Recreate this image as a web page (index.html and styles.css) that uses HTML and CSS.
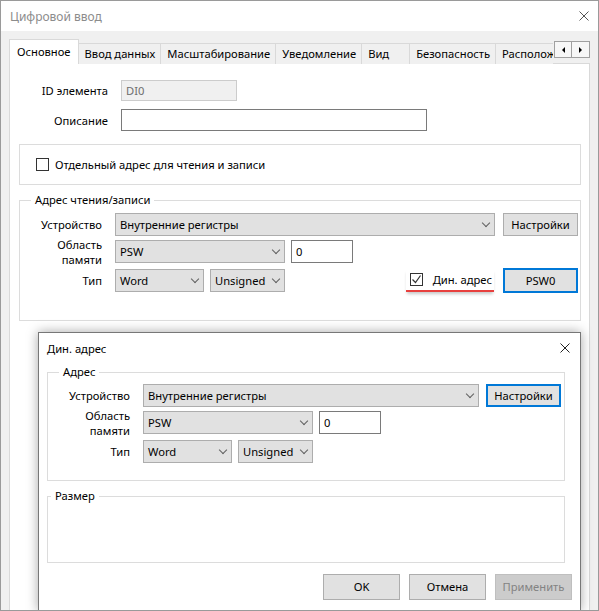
FILE: index.html
```html
<!doctype html>
<html lang="ru">
<head>
<meta charset="utf-8">
<title>Цифровой ввод</title>
<link rel="stylesheet" href="styles.css">
</head>
<body>
<div class="window">
  <div class="titlebar">
    <span class="title">Цифровой ввод</span>
    <svg class="close" width="10" height="10" viewBox="0 0 10 10"><path d="M0.5 0.5L9.5 9.5M9.5 0.5L0.5 9.5"/></svg>
  </div>

  <div class="client">
    <div class="tabbar">
      <ul class="tabs">
        <li class="tab active">Основное</li>
        <li class="tab">Ввод данных</li>
        <li class="tab">Масштабирование</li>
        <li class="tab">Уведомление</li>
        <li class="tab">Вид</li>
        <li class="tab">Безопасность</li>
        <li class="tab">Расположение</li>
      </ul>
      <div class="scroller">
        <span class="arrow prev"></span>
        <span class="arrow next"></span>
      </div>
    </div>

    <div class="panel">
      <div class="fields">
        <span class="lbl">ID элемента</span>
        <div class="edit readonly">DI0</div>
        <span class="lbl">Описание</span>
        <div class="edit desc"></div>
      </div>

      <div class="box">
        <span class="check"></span>
        <span>Отдельный адрес для чтения и записи</span>
      </div>

      <fieldset class="group">
        <legend>Адрес чтения/записи</legend>
        <div class="row">
          <span class="lbl">Устройство</span>
          <div class="combo device">Внутренние регистры</div>
          <div class="btn setup">Настройки</div>
        </div>
        <div class="row">
          <span class="lbl">Область<br>памяти</span>
          <div class="combo area">PSW</div>
          <div class="edit offset">0</div>
        </div>
        <div class="row type">
          <span class="lbl">Тип</span>
          <div class="combo word">Word</div>
          <div class="combo sign">Unsigned</div>
          <div class="dyn">
            <span class="check on"><svg width="11" height="11" viewBox="0 0 11 11"><path d="M1.5 5.5L4.5 8.5L9.5 1.5"/></svg></span>
            <span>Дин. адрес</span>
          </div>
          <div class="btn focus addr">PSW0</div>
        </div>
      </fieldset>
    </div>
  </div>

  <div class="dialog">
    <div class="dlg-title">
      <span>Дин. адрес</span>
      <svg class="close dark" width="10" height="10" viewBox="0 0 10 10"><path d="M0.5 0.5L9.5 9.5M9.5 0.5L0.5 9.5"/></svg>
    </div>

    <fieldset class="group">
      <legend>Адрес</legend>
      <div class="row">
        <span class="lbl">Устройство</span>
        <div class="combo device">Внутренние регистры</div>
        <div class="btn focus setup">Настройки</div>
      </div>
      <div class="row">
        <span class="lbl">Область<br>памяти</span>
        <div class="combo area">PSW</div>
        <div class="edit offset">0</div>
      </div>
      <div class="row type">
        <span class="lbl">Тип</span>
        <div class="combo word">Word</div>
        <div class="combo sign">Unsigned</div>
      </div>
    </fieldset>

    <fieldset class="group size">
      <legend>Размер</legend>
    </fieldset>

    <div class="actions">
      <div class="btn">OK</div>
      <div class="btn">Отмена</div>
      <div class="btn disabled">Применить</div>
    </div>
  </div>
</div>
</body>
</html>
```

FILE: styles.css
```css
* { box-sizing: border-box; }
html, body { margin: 0; }
body { font: 11.2px/15px "Noto Sans", "Segoe UI", sans-serif; color: #000; background: #fff; }

/* main window */
.window { position: relative; width: 599px; height: 611px; border: 1px solid #9a9a9a; background: #f0f0f0; overflow: hidden; }
.titlebar { display: flex; align-items: center; justify-content: space-between; height: 30px; padding: 0 9px; background: #fff; }
.title { color: #8c8c8c; font-size: 12px; }
.close { fill: none; stroke: #555; stroke-width: 1; }
.close.dark { stroke: #222; }

.client { padding-top: 8px; }

/* tab strip */
.tabbar { display: flex; height: 24px; padding: 0 8px; }
.tabs { display: flex; align-items: flex-end; flex: 1; height: 25px; margin: 0; padding: 0; list-style: none; overflow: hidden; position: relative; z-index: 1; }
.tab { flex: none; height: 21px; min-width: 49px; padding: 0 5px 0 6px; margin-right: -1px; border: 1px solid #d9d9d9; border-bottom: 0; background: #f0f0f0; line-height: 19px; white-space: nowrap; }
.tab.active { height: 25px; padding: 0 7px; background: #fff; line-height: 23px; }
.scroller { display: flex; height: 17px; margin: 2px 0 0 1px; }
.arrow { display: flex; align-items: center; justify-content: center; width: 18px; height: 17px; border: 1px solid #a0a0a0; background: #f7f7f7; }
.arrow + .arrow { border-left: 0; }
.arrow::before { content: ""; border: 3px solid transparent; }
.arrow.prev::before { border-right-color: #000; margin-left: -3px; }
.arrow.next::before { border-left-color: #000; margin-right: -3px; }

.panel { height: 600px; margin: 0 8px; padding-top: 16px; border: 1px solid #d9d9d9; background: #fff; }

/* form controls */
.lbl { text-align: right; }
.fields { display: grid; grid-template-columns: 98px auto; justify-content: start; align-items: center; column-gap: 13px; row-gap: 8px; }
.edit { height: 22px; padding: 0 4px; border: 1px solid #7a7a7a; background: #fff; line-height: 20px; }
.edit.readonly { width: 116px; height: 21px; border-color: #cccccc; background: #f0f0f0; color: #6d6d6d; line-height: 19px; }
.edit.desc { width: 306px; }
.edit.offset { width: 62px; height: 23px; margin-left: 6px; line-height: 21px; }

.combo { position: relative; height: 23px; padding: 0 20px 0 4px; border: 1px solid #adadad; background: #e1e1e1; line-height: 21px; white-space: nowrap; }
.combo::after { content: ""; position: absolute; right: 5px; top: 6px; width: 5px; height: 5px; border-right: 1px solid #606060; border-bottom: 1px solid #606060; transform: rotate(45deg); }
.combo.device { width: 380px; }
.combo.area { width: 170px; }
.combo.word { width: 89px; }
.combo.sign { width: 75px; margin-left: 6px; }

.btn { width: 75px; height: 23px; border: 1px solid #adadad; background: #e1e1e1; text-align: center; line-height: 21px; }
.btn.setup { margin-left: 8px; }
.btn.focus { border: 2px solid #0078d7; line-height: 19px; }
.btn.addr { height: 25px; line-height: 21px; }
.btn.disabled { border-color: #bfbfbf; background: #cccccc; color: #838383; }

.check { display: flex; align-items: center; justify-content: center; flex: none; width: 13px; height: 13px; border: 1px solid #333; background: #fff; }
.check svg { fill: none; stroke: #333; stroke-width: 1.2; }

/* group boxes */
.box { display: flex; align-items: center; gap: 6px; height: 41px; margin: 13px 8px 0 9px; padding-left: 16px; border: 1px solid #dcdcdc; }
.group { min-width: 0; margin: 7px 8px 0 9px; padding: 5px 2px 28px 8px; border: 1px solid #dcdcdc; }
.group legend { margin-left: 3px; padding: 0 4px; line-height: 16px; }
.row { display: flex; align-items: center; height: 23px; }
.row + .row { margin-top: 4px; }
.row.type { margin-top: 6px; }
.row .lbl { flex: none; width: 74px; margin-right: 13px; }

.dyn { display: flex; align-items: center; gap: 10px; height: 23px; margin: 0 9px 0 auto; padding: 0 2px 0 4px; border-bottom: 2px solid #e8403e; box-shadow: 0 3px 3px -1px rgba(0, 0, 0, .22); }

/* dynamic address dialog */
.dialog { position: absolute; left: 37px; top: 331px; width: 543px; height: 279px; padding-left: 8px; border: 1px solid #777; background: #fff; box-shadow: 0 0 11px rgba(0, 0, 0, .35); }
.dlg-title { display: flex; align-items: center; justify-content: space-between; height: 30px; padding-right: 10px; }
.dialog .group { width: 518px; margin: 1px 0 0; padding-top: 4px; padding-bottom: 17px; }
.dialog .combo.device { width: 336px; }
.dialog .btn.setup { margin-left: 7px; }
.dialog .group.size { height: 75px; margin-top: 7px; padding: 0; }
.actions { display: flex; justify-content: flex-end; gap: 9px; margin-top: 11px; padding-right: 8px; }
.actions .btn { width: 77px; height: 26px; line-height: 24px; }
```
